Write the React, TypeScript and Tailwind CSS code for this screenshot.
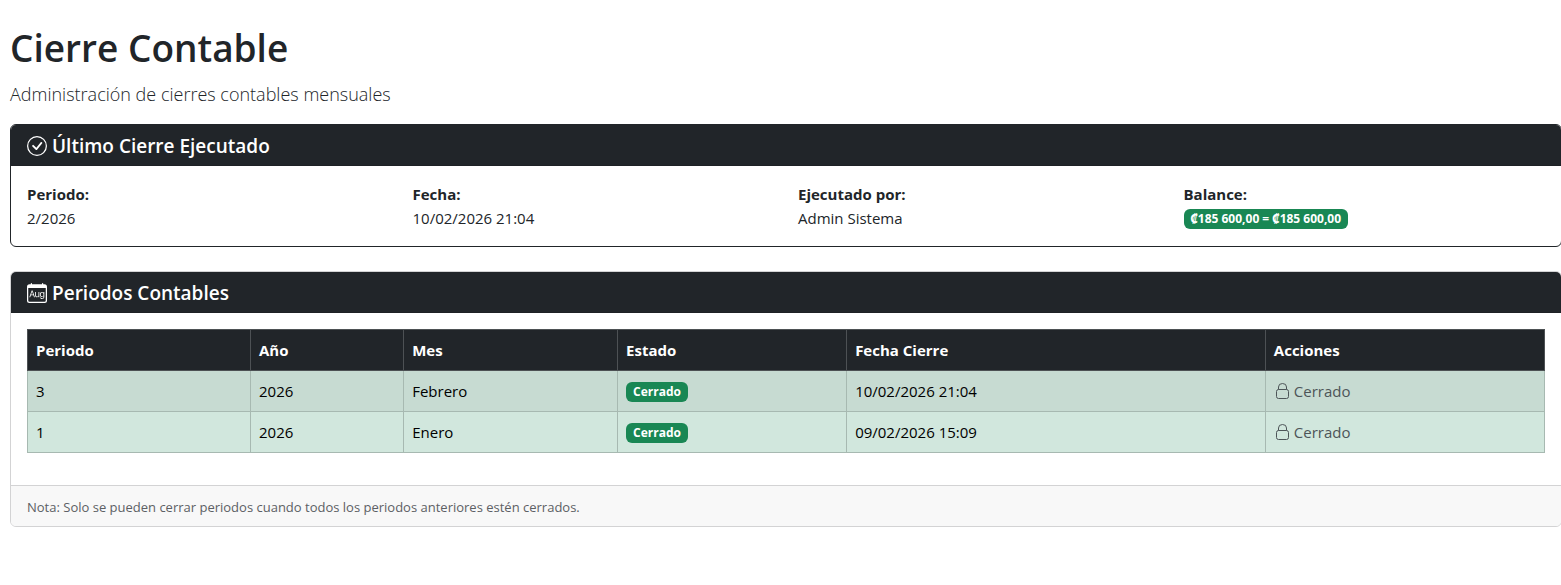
import type { ReactNode } from "react";
import { BsCalendarMonth, BsCheckCircle } from "react-icons/bs";

type Period = {
    id: number;
    year: number;
    month: string;
    closedAt: string;
}

const periods: Period[] = [
    { id: 3, year: 2026, month: "Febrero", closedAt: "10/02/2026 21:04" },
    { id: 1, year: 2026, month: "Enero", closedAt: "09/02/2026 15:09" },
];

const columns = [
    { label: "Periodo", width: "w-[14.7%]" },
    { label: "Año", width: "w-[10.1%]" },
    { label: "Mes", width: "w-[14.1%]" },
    { label: "Estado", width: "w-[15.1%]" },
    { label: "Fecha Cierre", width: "w-[27.6%]" },
    { label: "Acciones", width: "w-[18.4%]" },
];

function LockIcon() {
    return (
        <svg className="size-4" viewBox="0 0 16 16" fill="none" stroke="currentColor" aria-hidden="true">
            <rect x="2.5" y="6.5" width="12" height="9" rx="2" />
            <path d="M4.5 6.5V4a4 3.5 0 0 1 8 0v2.5" />
        </svg>
    );
}

function Badge({ children }: { children: ReactNode }) {
    return (
        <span className="block h-5 w-fit rounded-md bg-[#198754] px-[7px] text-[12px] font-bold leading-5 text-white">
            {children}
        </span>
    );
}

function CardHeader({ icon, title }: { icon: ReactNode; title: string }) {
    return (
        <div className="flex items-center gap-[5px] border-b border-[#1e2125] bg-[#212529] px-4 pb-[7px] pt-[9px] text-white">
            {icon}
            <h2 className="text-[19px] font-semibold leading-6">{title}</h2>
        </div>
    );
}

function Field({ label, children }: { label: string; children: ReactNode }) {
    return (
        <div>
            <dt className="font-bold">{label}</dt>
            <dd>{children}</dd>
        </div>
    );
}

export default function App() {
    return (
        <div className="overflow-x-hidden bg-white">
            {/* Cards run one pixel past the right edge of the window */}
            <main className="-mr-px pb-14 pl-[10px] pt-6 font-['Open_Sans','Noto_Sans',sans-serif] text-[15px] leading-6 text-[#212529]">
                <h1 className="text-[37px] font-semibold leading-[48px]">Cierre Contable</h1>
                <p className="mb-[15px] mt-[7px] text-[18px] font-light leading-[30px]">
                    Administración de cierres contables mensuales
                </p>

                <section className="mb-6 overflow-hidden rounded-md border border-[#212529]">
                    <CardHeader icon={<BsCheckCircle className="size-5" />} title="Último Cierre Ejecutado" />
                    <dl className="grid grid-cols-4 gap-6 p-4">
                        <Field label="Periodo:">2/2026</Field>
                        <Field label="Fecha:">10/02/2026 21:04</Field>
                        <Field label="Ejecutado por:">Admin Sistema</Field>
                        <Field label="Balance:">
                            <div className="flex h-6 items-end pb-px">
                                <Badge>₡185 600,00 = ₡185 600,00</Badge>
                            </div>
                        </Field>
                    </dl>
                </section>

                <section className="overflow-hidden rounded-md border border-[#d3d3d4]">
                    <CardHeader icon={<BsCalendarMonth className="size-5" />} title="Periodos Contables" />
                    <div className="p-4">
                        <table className="mb-4 w-full table-fixed border-collapse text-left">
                            <thead>
                                <tr className="bg-[#212529] text-white">
                                    {columns.map((column) => (
                                        <th key={column.label} className={`${column.width} border border-[#4d5154] p-2 font-bold`}>
                                            {column.label}
                                        </th>
                                    ))}
                                </tr>
                            </thead>
                            <tbody>
                                {periods.map((period) => (
                                    <tr key={period.id} className="bg-[#d1e7dd] text-black odd:bg-[#c7dbd2]">
                                        <td className="border border-[#a7b9b1] p-2">{period.id}</td>
                                        <td className="border border-[#a7b9b1] p-2">{period.year}</td>
                                        <td className="border border-[#a7b9b1] p-2">{period.month}</td>
                                        <td className="border border-[#a7b9b1] p-2">
                                            <div className="flex h-6 items-end pb-px">
                                                <Badge>Cerrado</Badge>
                                            </div>
                                        </td>
                                        <td className="border border-[#a7b9b1] p-2">{period.closedAt}</td>
                                        <td className="border border-[#a7b9b1] p-2">
                                            <span className="flex items-center gap-1 text-[#4d5558]">
                                                <LockIcon />
                                                Cerrado
                                            </span>
                                        </td>
                                    </tr>
                                ))}
                            </tbody>
                        </table>
                    </div>
                    <footer className="border-t border-[#d3d3d4] bg-[#f8f8f8] px-4 pb-[7px] pt-[9px] text-[#5c6064]">
                        <small className="block text-[13px] leading-6">
                            Nota: Solo se pueden cerrar periodos cuando todos los periodos anteriores estén cerrados.
                        </small>
                    </footer>
                </section>
            </main>
        </div>
    );
}
